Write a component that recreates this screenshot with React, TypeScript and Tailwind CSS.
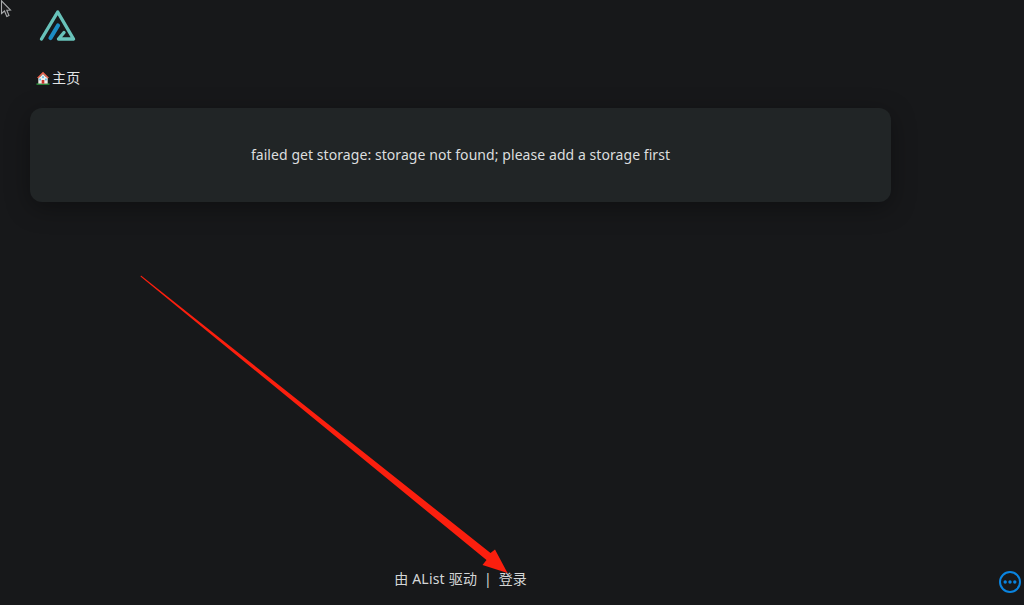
import React from "react";

function Logo() {
  return (
    <svg width="38" height="34" viewBox="0 0 38 34" fill="none" className="block">
      <path
        d="M3.5 31 L19.7 4 L35.5 31 L20.5 31 L26 24.5"
        stroke="#68c2ba"
        strokeWidth="3.4"
        strokeLinecap="round"
        strokeLinejoin="round"
      />
      <path d="M12.5 30 L20 17.5" stroke="#1c8cc4" strokeWidth="4.2" strokeLinecap="round" />
    </svg>
  );
}

function HouseIcon() {
  return (
    <svg width="14" height="14" viewBox="0 0 14 14" className="block">
      <rect x="0.5" y="12.4" width="13" height="1.4" fill="#2f9e3f" />
      <path d="M2.3 6.5 H11.7 V12.6 H2.3 Z" fill="#f0ece6" />
      <path d="M7 0.8 L13 6.8 L11.6 7.2 L7 3 L2.4 7.2 L1 6.8 Z" fill="#e8604c" />
      <path d="M7 3 L11 7 H3 Z" fill="#f0ece6" />
      <rect x="5.7" y="9" width="2.6" height="3.6" fill="#c9352b" />
      <rect x="3.2" y="7.6" width="1.8" height="1.8" fill="#58b7e8" />
      <rect x="9" y="7.6" width="1.8" height="1.8" fill="#58b7e8" />
      <rect x="6.1" y="5.3" width="1.8" height="1.8" fill="#58b7e8" />
    </svg>
  );
}

export default function App() {
  return (
    <div
      className="relative h-[605px] w-[1024px] overflow-hidden bg-[#17181a] text-[#e2e4e5]"
      style={{ fontFamily: '"Noto Sans", "Noto Sans CJK SC", sans-serif' }}
    >
      {/* cursor left over in the screenshot */}
      <svg width="12" height="18" viewBox="0 0 12 18" className="absolute left-0 top-0">
        <path d="M1.5 0.8 V13.5 L4.5 11 L6.8 16.5 L9 15.5 L6.8 10.3 L10.5 10 Z" fill="#1c1c1e" stroke="#a9abad" strokeWidth="1.1" />
      </svg>

      <div className="flex h-full flex-col pl-[30px]">
        <div className="pl-2 pt-2">
          <Logo />
        </div>

        <div className="mt-[26px] flex h-5 items-center gap-[2px] pl-[6px] text-sm leading-5">
          <HouseIcon />
          <span className="tracking-[0.2px]">主页</span>
        </div>

        <div className="mt-5 flex h-[94px] w-[861px] items-center justify-center rounded-xl bg-[#212526] shadow-[0_6px_24px_rgba(0,0,0,0.35)]">
          <p className="text-sm tracking-[0.065px] text-[#dcdedf]">
            failed get storage: storage not found; please add a storage first
          </p>
        </div>

        <div className="mt-auto flex h-[50px] w-[861px] items-center justify-center pb-[2px] text-sm text-[#d4d6d7]">
          <span className="tracking-[0.2px]">由 AList 驱动</span>
          <span className="mx-[7px]">|</span>
          <span>登录</span>
        </div>
      </div>

      {/* red annotation arrow */}
      <svg width="1024" height="605" viewBox="0 0 1024 605" className="pointer-events-none absolute left-0 top-0">
        <path
          d="M141 275.5 L490.5 553 L495 549.5 L507.5 573 L482.5 565 L486.5 560 L140.5 276.5 Z"
          fill="#fb1f0e"
        />
      </svg>

      {/* floating menu button */}
      <svg width="24" height="24" viewBox="0 0 24 24" className="absolute left-[998px] top-[570px]">
        <circle cx="12" cy="12" r="10" fill="none" stroke="#0a84e0" strokeWidth="2" />
        <circle cx="7.2" cy="12" r="1.7" fill="#0a84e0" />
        <circle cx="12" cy="12" r="1.7" fill="#0a84e0" />
        <circle cx="16.8" cy="12" r="1.7" fill="#0a84e0" />
      </svg>
    </div>
  );
}
